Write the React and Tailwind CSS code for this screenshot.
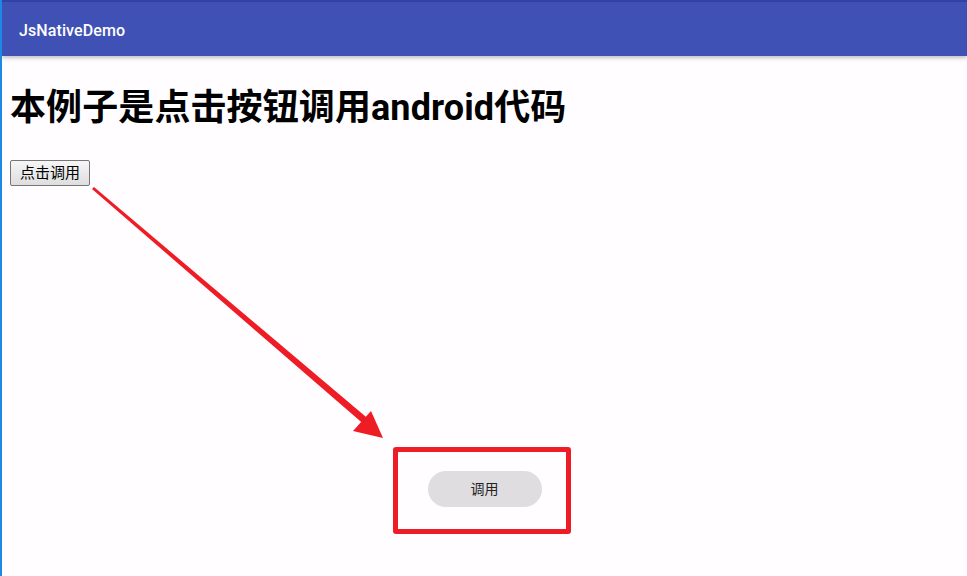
export default function App() {
  return (
    <div
      className="relative w-[967px] h-[576px] overflow-hidden bg-[#fffdff] border-l-2 border-[#1e88e5]"
      style={{ fontFamily: 'Roboto, "Noto Sans CJK SC", sans-serif' }}
    >
      {/* status strip + app bar */}
      <div className="h-[2px] bg-[#3443a6]" />
      <header className="h-[54px] bg-[#3f51b5] flex items-center pl-[17px] pt-[3px] shadow-[0_2px_4px_rgba(0,0,0,0.25)]">
        <span className="text-white text-[16px] font-medium tracking-[0.1px]">JsNativeDemo</span>
      </header>

      {/* web view */}
      <main className="px-[8px] pt-[31px]">
        <h1 className="text-[36px] leading-[42px] font-bold text-black tracking-[0.1px]">本例子是点击按钮调用android代码</h1>
        <button className="mt-[31px] h-[26px] px-[9px] text-[15px] leading-none text-black border border-[#767676] rounded-[2px] bg-gradient-to-b from-[#f6f6f6] to-[#dedede]">
          点击调用
        </button>
      </main>

      {/* native view */}
      <div className="flex justify-center pt-[285px]">
        <button className="w-[114px] h-[36px] rounded-full bg-[#e0dde1] text-[14px] text-[#222]">调用</button>
      </div>

      {/* annotation */}
      <svg className="absolute inset-0 pointer-events-none" width="967" height="576">
        <polygon points="90,189 92,187 370,422 365,427" fill="#ee1c25" />
        <polygon points="381,438 369,411 351,431" fill="#ee1c25" />
      </svg>
      <div className="absolute left-[391px] top-[447px] w-[178px] h-[87px] border-[5px] border-[#ee1c25] rounded-[3px]" />
    </div>
  );
}
